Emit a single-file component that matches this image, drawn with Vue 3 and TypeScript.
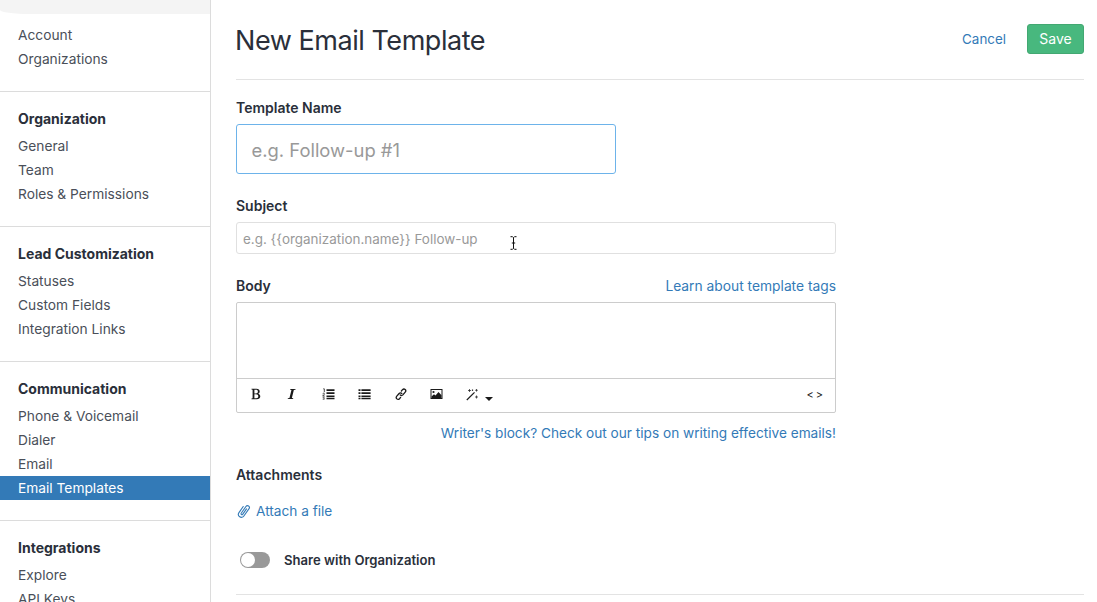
<template>
  <div class="page">
    <aside class="sidebar">
      <div class="sidebar-top"></div>
      <section v-for="(group, i) in groups" :key="i" class="nav-group">
        <h4 v-if="group.title" class="nav-title">{{ group.title }}</h4>
        <a
          v-for="item in group.items"
          :key="item"
          class="nav-item"
          :class="{ active: item === 'Email Templates' }"
        >{{ item }}</a>
      </section>
    </aside>

    <main class="content">
      <header class="head">
        <h1>New Email Template</h1>
        <div class="head-actions">
          <a class="link cancel">Cancel</a>
          <button class="save" type="button">Save</button>
        </div>
      </header>

      <label class="label first">Template Name</label>
      <input class="input-lg" placeholder="e.g. Follow-up #1" />

      <label class="label">Subject</label>
      <div class="subject-wrap">
        <input class="input-sm" placeholder="e.g. {{organization.name}} Follow-up" />
        <!-- I-beam mouse cursor -->
        <svg class="ibeam" width="7" height="14" viewBox="0 0 7 14">
          <path d="M0.5 0.7h2l1 1 1-1h2M3.5 1.7v10.6M0.5 13.3h2l1-1 1 1h2M1.8 7h3.4" fill="none" stroke="#111" stroke-width="1" />
        </svg>
      </div>

      <div class="body-row">
        <label class="label body-label">Body</label>
        <a class="link learn">Learn about template tags</a>
      </div>
      <div class="editor">
        <div class="editor-area"></div>
        <div class="toolbar">
          <svg class="tool t-b" width="12" height="12" viewBox="0 0 12 12">
            <path fill-rule="evenodd" d="M1.5 .8h5c2 0 3.2 1 3.2 2.6 0 1.1-.6 1.9-1.7 2.3 1.4.3 2.3 1.3 2.3 2.6 0 1.9-1.4 2.9-3.6 2.9H1.5v-.7l1.1-.2V1.7L1.5 1.5zM4.4 1.7v3.7h1.5c1.3 0 2-.7 2-1.9 0-1.200-.7-1.800-2-1.800zM4.400 6.200v4h1.800c1.400 0 2.100-.7 2.100-2s-.8-2-2.300-2z" fill="#1a1a1a" />
          </svg>
          <svg class="tool t-i" width="12" height="12" viewBox="0 0 12 12">
            <path d="M4.400 1h5.200l-.15.7-1.600.3-2 8 1.400.3-.15.7H1.700l.15-.7 1.600-.3 2-8-1.400-.3z" fill="#1a1a1a" />
          </svg>
          <svg class="tool t-ol" width="13" height="12" viewBox="0 0 13 12">
            <path d="M4.500 1.200h8V3h-8zM4.500 4.300h8v1.800h-8zM4.500 7.400h8v1.800h-8zM4.500 10h8v1.200h-8z" fill="#1a1a1a" />
            <path d="M1.300 .8h1v3.400M.6 5.800c.4-.8 1.900-.7 1.900.2 0 .8-1.400 1.100-1.900 2h2.100" fill="none" stroke="#1a1a1a" stroke-width=".8" />
            <path d="M.6 9.300h1.800l-1 .9c.8 0 1.200.3 1.200.7 0 .6-1.200.7-2 .3" fill="none" stroke="#1a1a1a" stroke-width=".6" />
          </svg>
          <svg class="tool t-ul" width="13" height="12" viewBox="0 0 13 12">
            <path d="M.5 1.200h2V3h-2zM.5 4.300h2v1.800h-2zM.5 7.400h2v1.800h-2zM.5 10h2v1.200h-2zM3.400 1.200h9.200V3H3.400zM3.400 4.300h9.200v1.800H3.400zM3.400 7.400h9.200v1.800H3.400zM3.400 10h9.200v1.200H3.400z" fill="#1a1a1a" />
          </svg>
          <svg class="tool t-link" width="12" height="13" viewBox="0 0 12 13" fill="none" stroke="#1a1a1a" stroke-width="1.300" stroke-linecap="round">
            <path d="M5.200 6.900c.8.900 1.900.8 2.700 0l2.300-2.700c1.700-2-.9-4.300-2.700-2.500L6.400 3" />
            <path d="M6.800 5.500c-.8-.9-1.900-.8-2.700 0L1.800 8.200c-1.700 2 .9 4.300 2.700 2.500L5.600 9.400" />
          </svg>
          <svg class="tool t-img" width="13" height="12" viewBox="0 0 13 12">
            <path fill-rule="evenodd" d="M.5 1h12v10H.5zM1.500 2v8h10V2z" fill="#1a1a1a" />
            <path d="M1.500 10V8.500l2.500-2.300 1.500 1.300 3-3.500 3 3.300V10z" fill="#1a1a1a" />
            <circle cx="3.500" cy="4" r="1.100" fill="#1a1a1a" />
          </svg>
          <svg class="tool t-wand" width="13" height="13" viewBox="0 0 13 13">
            <path d="M.8 12 8.500 4.300" stroke="#1a1a1a" stroke-width="1.200" fill="none" />
            <path d="M3.500 1v3M2 2.500h3M10.500 1v2.600M9.200 2.300h2.600M10.500 7.500v3M9 9h3M6.500 1.500v1.500M5.800 2.200h1.400" stroke="#1a1a1a" stroke-width=".7" fill="none" />
          </svg>
          <span class="caret"></span>
          <span class="code">&lt;&gt;</span>
        </div>
      </div>
      <a class="link tips">Writer's block? Check out our tips on writing effective emails!</a>

      <label class="label attach-label">Attachments</label>
      <a class="link attach">
        <svg width="14" height="16" viewBox="0 0 14 16" fill="none" stroke="#337ab7" stroke-width="1.100" stroke-linecap="round">
          <path transform="rotate(35 7 8)" d="M3.800 4.800v7.400a3 3 0 0 0 6 0V3.200a1.900 1.900 0 0 0-3.800 0v8.300a.9.900 0 0 0 1.800 0V4.800" />
        </svg>
        Attach a file
      </a>

      <div class="share">
        <span class="toggle"><span class="knob"></span></span>
        <span class="share-text">Share with Organization</span>
      </div>
      <div class="foot-rule"></div>
    </main>
  </div>
</template>

<script setup lang="ts">
interface NavGroup {
  title?: string
  items: string[]
}

const groups: NavGroup[] = [
  { items: ['Account', 'Organizations'] },
  { title: 'Organization', items: ['General', 'Team', 'Roles & Permissions'] },
  { title: 'Lead Customization', items: ['Statuses', 'Custom Fields', 'Integration Links'] },
  { title: 'Communication', items: ['Phone & Voicemail', 'Dialer', 'Email', 'Email Templates'] },
  { title: 'Integrations', items: ['Explore', 'API Keys'] },
]
</script>

<style>
html,
body {
  margin: 0;
  overflow: hidden;
  background: #fff;
}
</style>

<style scoped>
.page {
  display: flex;
  width: 1097px;
  height: 602px;
  overflow: hidden;
  font-family: Inter, "Liberation Sans", sans-serif;
  font-size: 14px;
  color: #4a4f59;
}

.sidebar {
  flex: 0 0 210px;
  height: 602px;
  overflow: hidden;
  border-right: 1px solid #dcdcdc;
}

.sidebar-top {
  height: 14px;
  margin-bottom: 9px;
  background: #f4f4f4;
  border-bottom-left-radius: 30px 4px;
}

.nav-group {
  padding: 15px 0 20px;
  border-bottom: 1px solid #dcdcdc;
}

.nav-group:first-of-type {
  padding-top: 0;
}

.nav-title {
  margin: 0 0 3px;
  padding-left: 18px;
  font-size: 14px;
  line-height: 24px;
  font-weight: 700;
  color: #2a2f3a;
}

.nav-item {
  display: block;
  height: 24px;
  padding-left: 18px;
  font-size: 13.75px;
  line-height: 24px;
}

.nav-item.active {
  background: #337ab7;
  color: #fff;
}

.content {
  flex: 1;
  display: flex;
  flex-direction: column;
  align-items: flex-start;
  padding: 2px 13px 0 25px;
  position: relative;
}

.head {
  box-sizing: border-box;
  display: flex;
  align-items: center;
  justify-content: space-between;
  align-self: stretch;
  height: 78px;
  padding-bottom: 3px;
  border-bottom: 1px solid #e3e3e3;
}

.head h1 {
  margin: 3px 0 0 -1px;
  font-size: 27px;
  line-height: 34px;
  font-weight: 400;
  color: #2a2f3a;
  letter-spacing: -0.45px;
}

.head-actions {
  display: flex;
  align-items: center;
  gap: 21px;
}

.link {
  color: #337ab7;
  font-size: 13.65px;
}

.cancel {
  font-size: 13.4px;
}

.learn {
  font-size: 13.8px;
}

.save {
  width: 57px;
  height: 30px;
  padding: 0 0 2px;
  border: 1px solid #43a872;
  border-radius: 3px;
  background: #48b87e;
  color: #fff;
  font: 14px Inter, sans-serif;
}

.label {
  display: block;
  margin: 23px 0 8px;
  font-size: 14px;
  line-height: 17px;
  font-weight: 600;
  color: #2a2f3a;
}

.label.first {
  margin: 19px 0 8px;
}

.input-lg {
  box-sizing: border-box;
  width: 380px;
  height: 50px;
  padding: 2px 15px 0 14.500px;
  border: 1px solid #6db3ea;
  border-radius: 3px;
  outline: none;
  font: 18.4px Inter, sans-serif;
  color: #2a2f3a;
}

.input-lg::placeholder,
.input-sm::placeholder {
  color: #999;
  opacity: 1;
}

.subject-wrap {
  position: relative;
  width: 600px;
  height: 32px;
}

.input-sm {
  box-sizing: border-box;
  display: block;
  width: 600px;
  height: 32px;
  padding: 2px 6px 0;
  border: 1px solid #e0e0e0;
  border-radius: 3px;
  outline: none;
  font: 13.45px Inter, sans-serif;
  color: #2a2f3a;
}

.ibeam {
  position: absolute;
  left: 274px;
  top: 14px;
}

.body-row {
  display: flex;
  align-items: center;
  justify-content: space-between;
  width: 600px;
  height: 17px;
  margin: 23px 0 8px;
}

.body-label {
  margin: 0;
}

.editor {
  box-sizing: border-box;
  width: 600px;
  height: 111px;
  border: 1px solid #ccc;
  border-radius: 2px;
}

.editor-area {
  height: 75px;
  border-bottom: 1px solid #ccc;
}

.toolbar {
  position: relative;
  height: 34px;
}

.tool {
  position: absolute;
  top: 9px;
}

.t-b { left: 13px; }
.t-i { left: 49px; }
.t-ol { left: 85px; }
.t-ul { left: 121px; }
.t-link { left: 158px; }
.t-img { left: 193px; }
.t-wand { left: 229px; }

.caret {
  position: absolute;
  left: 248px;
  top: 18px;
  border-left: 4px solid transparent;
  border-right: 4px solid transparent;
  border-top: 4px solid #1a1a1a;
}

.code {
  position: absolute;
  right: 10px;
  top: 9px;
  font-size: 11px;
  line-height: 15px;
  letter-spacing: 2px;
  color: #1a1a1a;
}

.tips {
  align-self: flex-start;
  width: 600px;
  margin-top: 12px;
  line-height: 17px;
  text-align: right;
}

.attach-label {
  margin: 24px 0 19px;
}

.attach {
  display: flex;
  align-items: center;
  gap: 5px;
  margin-left: 1px;
  height: 17px;
}

.share {
  display: flex;
  align-items: center;
  margin: 33px 0 0 4px;
  height: 16px;
}

.toggle {
  position: relative;
  width: 30px;
  height: 16px;
  border-radius: 8px;
  background: #999;
}

.knob {
  position: absolute;
  left: 1px;
  top: 1px;
  width: 14px;
  height: 14px;
  border-radius: 50%;
  background: #fff;
}

.share-text {
  margin-left: 14px;
  font-size: 13.1px;
  font-weight: 600;
  color: #2a2f3a;
}

.foot-rule {
  align-self: stretch;
  margin-top: 26px;
  border-top: 1px solid #e3e3e3;
}
</style>
